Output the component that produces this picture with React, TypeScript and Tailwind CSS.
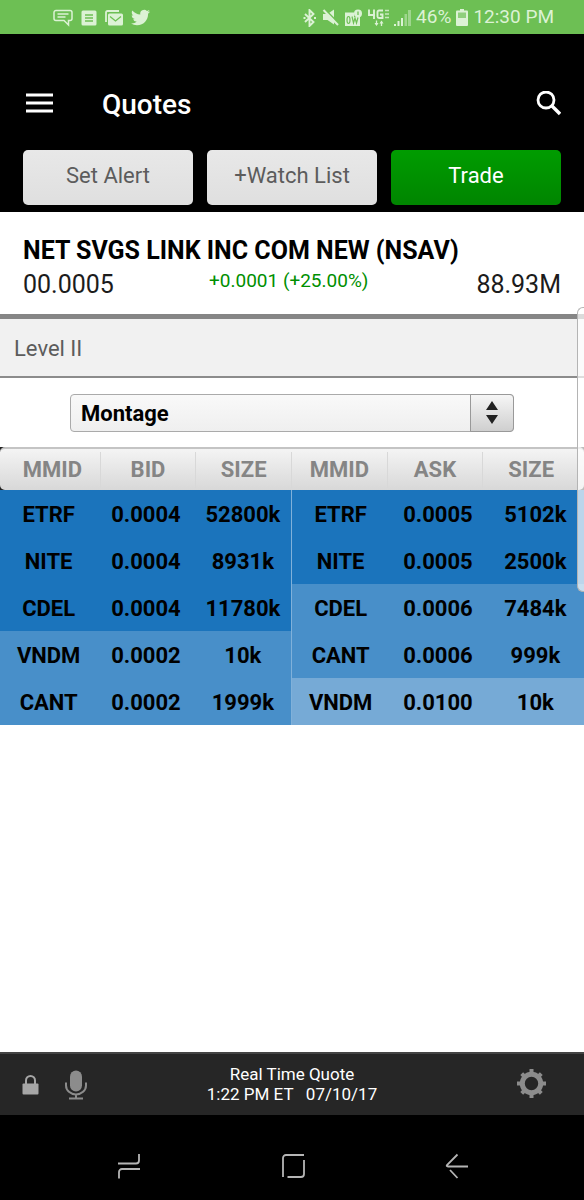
import type { ReactNode } from "react";

type Quote = [mmid: string, price: string, size: string];

type BookRow = {
  bid: Quote;
  ask: Quote;
  bidLevel: number;
  askLevel: number;
};

const LEVELS = ["bg-[#1b74bc]", "bg-[#488fc9]", "bg-[#76aad6]"];

const COLUMNS = ["MMID", "BID", "SIZE", "MMID", "ASK", "SIZE"];

const BOOK: BookRow[] = [
  { bid: ["ETRF", "0.0004", "52800k"], ask: ["ETRF", "0.0005", "5102k"], bidLevel: 0, askLevel: 0 },
  { bid: ["NITE", "0.0004", "8931k"], ask: ["NITE", "0.0005", "2500k"], bidLevel: 0, askLevel: 0 },
  { bid: ["CDEL", "0.0004", "11780k"], ask: ["CDEL", "0.0006", "7484k"], bidLevel: 0, askLevel: 1 },
  { bid: ["VNDM", "0.0002", "10k"], ask: ["CANT", "0.0006", "999k"], bidLevel: 1, askLevel: 1 },
  { bid: ["CANT", "0.0002", "1999k"], ask: ["VNDM", "0.0100", "10k"], bidLevel: 1, askLevel: 2 },
];

function StatusBar() {
  return (
    <div className="flex h-[34px] items-center justify-between bg-[#6dbf54] pt-px pr-[30px] pl-[53px] text-[#dcf2d5]">
      <div className="flex items-center gap-2">
        {/* Message */}
        <svg width="20" height="18" viewBox="0 0 20 18" fill="none" stroke="currentColor" strokeWidth="1.5">
          <path d="M3 1.5h14a2 2 0 0 1 2 2v6a2 2 0 0 1-2 2h-1.5V16l-4.5-4.5H3a2 2 0 0 1-2-2v-6a2 2 0 0 1 2-2z" />
          <path d="M4.5 5h11M4.5 8h8" />
        </svg>
        {/* Note */}
        <svg width="16" height="16" viewBox="0 0 16 16">
          <rect x="0.5" y="0.5" width="15" height="15" rx="1.5" fill="currentColor" />
          <path d="M4 5h8M4 8h8M4 11h8" stroke="#6dbf54" strokeWidth="1.3" />
        </svg>
        {/* Mail */}
        <svg width="18" height="16" viewBox="0 0 18 16" fill="none">
          <path d="M1 12V2.5A1.5 1.5 0 0 1 2.5 1H14" stroke="currentColor" strokeWidth="1.8" />
          <rect x="3" y="3.5" width="15" height="12" rx="1.5" fill="currentColor" />
          <path d="m5 6.5 5.5 4.5L16 6.5" stroke="#6dbf54" strokeWidth="1.3" />
        </svg>
        {/* Twitter */}
        <svg width="19" height="19" viewBox="0 0 24 24" fill="currentColor">
          <path d="M23.95 4.57a10 10 0 0 1-2.825.775 4.958 4.958 0 0 0 2.163-2.723c-.951.555-2.005.959-3.127 1.184a4.92 4.92 0 0 0-8.384 4.482C7.69 8.095 4.067 6.13 1.64 3.162a4.822 4.822 0 0 0-.666 2.475c0 1.71.87 3.213 2.188 4.096a4.904 4.904 0 0 1-2.228-.616v.06a4.923 4.923 0 0 0 3.946 4.827 4.996 4.996 0 0 1-2.212.085 4.936 4.936 0 0 0 4.604 3.417 9.867 9.867 0 0 1-6.102 2.105c-.39 0-.779-.023-1.17-.067a13.995 13.995 0 0 0 7.557 2.209c9.053 0 13.998-7.496 13.998-13.985 0-.21 0-.42-.015-.63a9.935 9.935 0 0 0 2.46-2.548z" />
        </svg>
      </div>

      <div className="flex items-center gap-[5px] text-[19px]">
        {/* Bluetooth */}
        <svg width="14" height="18" viewBox="0 0 14 18" fill="none" stroke="currentColor" strokeWidth="1.9">
          <path d="m2 5 8.5 8L6.5 17V1l4 4L2 13" />
          <path d="M0.5 9h2M11 9h2" />
        </svg>
        {/* Muted */}
        <svg width="17" height="17" viewBox="0 0 17 17">
          <path d="M1 5h4.5L12 0.5v15L5.5 11H1z" fill="currentColor" />
          <path d="M2.5 0 17 14.5" stroke="#6dbf54" strokeWidth="1.6" />
          <path d="M1.5 1 16 16" stroke="currentColor" strokeWidth="2" />
        </svg>
        {/* Outlook */}
        <svg width="18" height="18" viewBox="0 0 18 18" fill="none">
          <path d="M1 3.5h9V8h6v9H1z" fill="currentColor" />
          <circle cx="14" cy="4.5" r="4" fill="currentColor" />
          <path d="M14 2.5v3.5" stroke="#6dbf54" strokeWidth="1.3" />
          <ellipse cx="4.5" cy="11" rx="1.5" ry="3.5" stroke="#6dbf54" strokeWidth="1.2" />
          <path d="m8 7.5 1.5 6.5L11 9l1.5 5L14 8.5" stroke="#6dbf54" strokeWidth="1.2" />
        </svg>
        {/* 4G LTE */}
        <svg width="22" height="18" viewBox="0 0 22 18" fill="none" stroke="currentColor" strokeWidth="1.9">
          <path d="M2 0.5V6h6M7 0.5V10M16 1.5h-4A1.5 1.5 0 0 0 10.5 3v4.5A1.5 1.5 0 0 0 12 9h3.5V5.5H13" />
          <path d="M18 1.5h4M18 5h4M18 8.5h4" strokeWidth="1.3" opacity="0.8" />
          <path d="M9.5 11.5V16M14.5 17v-4.5" strokeWidth="1.3" />
          <path d="M7.5 14h4l-2 3zM12.5 14.5h4l-2-3z" fill="currentColor" stroke="none" />
        </svg>
        {/* Signal */}
        <svg width="17" height="17" viewBox="0 0 17 17" fill="currentColor">
          <path d="M0 15h2v2H0zM3.5 12h2v5h-2zM7 9h2v8H7z" />
          <path d="M10.5 5H13v12h-2.5zM14 1h3v16h-3z" opacity="0.45" />
        </svg>
        <span>46%</span>
        {/* Battery */}
        <svg width="12" height="17" viewBox="0 0 12 17" fill="currentColor">
          <path d="M4 0h4v2H4z" />
          <rect y="1.5" width="12" height="15.5" rx="1" />
          <path d="M2 3.5h8V9H2z" fill="#8fcf7c" />
        </svg>
        <span>12:30 PM</span>
      </div>
    </div>
  );
}

function ActionButton({ children, primary }: { children: ReactNode; primary?: boolean }) {
  return (
    <button
      className={`h-[55px] flex-1 rounded-[5px] bg-gradient-to-b pb-1 text-[22px] ${
        primary ? "from-[#009c00] to-[#008500] text-white" : "from-[#e8e8e8] to-[#dfdfdf] text-[#5c5c5c]"
      }`}
    >
      {children}
    </button>
  );
}

function Header() {
  return (
    <header className="bg-black px-[23px] pb-[7px]">
      <div className="flex h-[116px] items-center pt-[22px] text-white">
        <button aria-label="Menu" className="px-[3px]">
          <svg width="27" height="20" viewBox="0 0 27 20" fill="none" stroke="currentColor" strokeWidth="3">
            <path d="M0 2h27M0 10h27M0 18h27" />
          </svg>
        </button>
        <h1 className="ml-[46px] flex-1 pt-[3px] text-[28px] font-medium">Quotes</h1>
        <button aria-label="Search">
          <svg width="25" height="25" viewBox="0 0 25 25" fill="none" stroke="currentColor" strokeWidth="2.8">
            <circle cx="10" cy="9" r="8" />
            <path d="m15.5 14.5 8.5 8.5" strokeWidth="3.4" />
          </svg>
        </button>
      </div>

      <div className="flex gap-[14px]">
        <ActionButton>Set Alert</ActionButton>
        <ActionButton>+Watch List</ActionButton>
        <ActionButton primary>Trade</ActionButton>
      </div>
    </header>
  );
}

function QuoteSummary() {
  return (
    <section className="h-[107px] border-b-[5px] border-[#868686] px-[23px] pt-[22px]">
      <h2 className="text-[25px] leading-[34px] font-bold">NET SVGS LINK INC COM NEW (NSAV)</h2>
      <div className="grid grid-cols-[186px_1fr_auto] text-[25px] leading-[34px] text-[#1c1c1c]">
        <span>00.0005</span>
        <span className="text-[19px] leading-[26px] text-[#008f00]">+0.0001 (+25.00%)</span>
        <span>88.93M</span>
      </div>
    </section>
  );
}

function ViewPicker() {
  return (
    <div className="flex h-[69px] items-center px-[70px]">
      <div className="relative h-[38px] w-full max-w-[444px]">
        <select
          aria-label="Level II view"
          className="h-full w-full appearance-none rounded-[4px] border border-[#aaa] bg-gradient-to-b from-[#f9f9f9] to-[#efefef] px-[10px] pt-[2px] text-[22px] leading-[26px] font-bold"
        >
          <option>Montage</option>
        </select>
        <span className="pointer-events-none absolute inset-y-0 right-0 flex w-[44px] items-center justify-center rounded-r-[4px] border border-[#999] bg-gradient-to-b from-[#f6f6f6] to-[#cfcfcf]">
          <svg width="12" height="23" viewBox="0 0 12 23" fill="#222">
            <path d="m6 0 6 9H0zM0 14h12l-6 9z" />
          </svg>
        </span>
      </div>
    </div>
  );
}

function MontageTable() {
  return (
    <table className="block w-full text-center text-[22px] font-bold">
      <thead className="block bg-[#222]">
        <tr className="grid h-[43px] grid-cols-6 items-center rounded-[5px] border-t-2 border-[#c4c4c4] bg-gradient-to-b from-[#f4f4f4] to-[#d8d8d8] px-[5px] text-[#858585]">
          {COLUMNS.map((name, i) => (
            <th key={i} scope="col" className="border-r border-[#d8d8d8] leading-[36px] last:border-r-0">
              {name}
            </th>
          ))}
        </tr>
      </thead>
      <tbody className="block">
        {BOOK.map((row, r) => (
          <tr key={r} className="grid grid-cols-6">
            {row.bid.map((value, i) => (
              <td
                key={i}
                className={`h-[47px] p-0 leading-[49px] ${LEVELS[row.bidLevel]} ${i === 2 ? "border-r border-[#80b1da]" : ""}`}
              >
                {value}
              </td>
            ))}
            {row.ask.map((value, i) => (
              <td key={i} className={`h-[47px] p-0 leading-[49px] ${LEVELS[row.askLevel]}`}>
                {value}
              </td>
            ))}
          </tr>
        ))}
      </tbody>
    </table>
  );
}

function Footer() {
  return (
    <footer className="grid h-[63px] grid-cols-[1fr_auto_1fr] items-center border-t-2 border-[#444] bg-[#262626] px-[22px] text-[#8c8c8c]">
      <div className="flex items-center gap-[26px]">
        <svg width="17" height="21" viewBox="0 0 17 21" fill="none">
          <path d="M4 10V6.5a4.5 4.5 0 0 1 9 0V10" stroke="#a6a6a6" strokeWidth="2" />
          <rect x="0.5" y="9.5" width="16" height="11" rx="1" fill="#a6a6a6" />
        </svg>
        <button aria-label="Voice">
          <svg width="22" height="30" viewBox="0 0 22 30" fill="none" stroke="currentColor">
            <rect x="5" y="0.5" width="12" height="21" rx="6" fill="currentColor" stroke="none" />
            <path d="M1 12.5v3a10 9 0 0 0 20 0v-3M11 24.5V29M4 28.5h14" strokeWidth="2" />
          </svg>
        </button>
      </div>
      <p className="pb-[2px] text-center text-[17px] leading-5 whitespace-pre text-white">
        Real Time Quote{"\n"}1:22 PM ET{"   "}07/10/17
      </p>
      <button aria-label="Settings" className="justify-self-end pr-[16px] pb-[2px]">
        <svg width="29" height="29" viewBox="-14.5 -14.5 29 29" fill="none" stroke="currentColor">
          <circle r="9.2" strokeWidth="5" />
          <path
            d="M0-10V-14.5M0 10V14.5M-10 0H-14.5M10 0H14.5M7-7 9.8-9.8M-7-7-9.8-9.8M7 7 9.8 9.8M-7 7-9.8 9.8"
            strokeWidth="4"
          />
        </svg>
      </button>
    </footer>
  );
}

function NavBar() {
  return (
    <nav className="flex h-[85px] items-center justify-center gap-[140px] bg-black pt-[16px] pl-[2px] text-[#b5b5b5]">
      <button aria-label="Recent apps">
        <svg width="24" height="26" viewBox="0 0 24 26" fill="none" stroke="currentColor" strokeWidth="1.8">
          <path d="M1 10.5h18a3 3 0 0 0 3-3V1M23 16H5a3 3 0 0 0-3 3v6.5" />
        </svg>
      </button>
      <button aria-label="Home">
        <svg width="24" height="26" viewBox="0 0 24 26" fill="none" stroke="currentColor" strokeWidth="1.8">
          <path d="M2 24V5a3 3 0 0 1 3-3h18M23 7v14a3 3 0 0 1-3 3H6.5" />
        </svg>
      </button>
      <button aria-label="Back">
        <svg width="24" height="26" viewBox="0 0 24 26" fill="none" stroke="currentColor" strokeWidth="1.8">
          <path d="M12.5 1.5 2 12q-1 1.5 1 1.5h20M5 17l7.5 8" />
        </svg>
      </button>
    </nav>
  );
}

export default function App() {
  return (
    <div className="relative flex min-h-screen flex-col bg-white font-['Roboto',sans-serif] text-black">
      <StatusBar />
      <Header />

      <main className="flex-1">
        <QuoteSummary />
        <h3 className="h-[59px] border-b-2 border-[#8c8c8c] bg-[#f1f1f1] px-[14px] text-[22px] leading-[59px] text-[#5c5c5c]">
          Level II
        </h3>
        <ViewPicker />
        <MontageTable />
      </main>

      <Footer />
      <NavBar />

      {/* Edge panel handle */}
      <div className="absolute top-[307px] right-0 h-[285px] w-[7px] rounded-l-[6px] border border-r-0 border-[#b4b4b4] bg-white/70" />
    </div>
  );
}
